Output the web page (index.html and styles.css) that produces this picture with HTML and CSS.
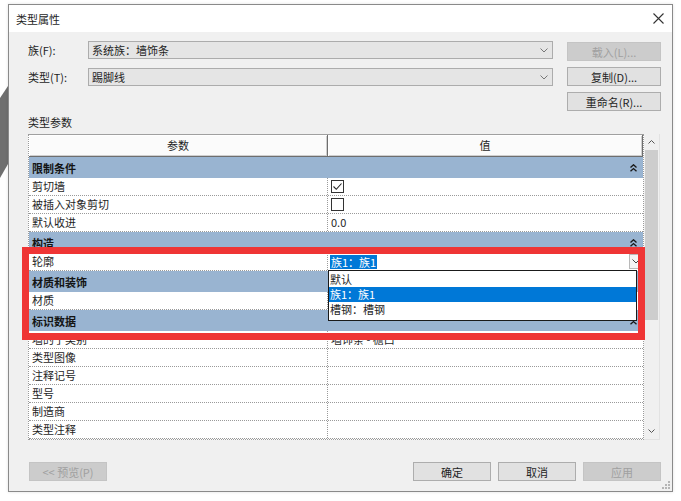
FILE: index.html
```html
<!DOCTYPE html>
<html lang="zh-CN">

<head>
    <meta charset="UTF-8">
    <title>类型属性</title>
    <link rel="stylesheet" href="styles.css">
</head>

<body>
    <div class="desk">
        <svg width="8" height="200" viewBox="0 0 8 200">
            <polygon points="8,86 8,164 0,178 0,98" fill="#6f6f6f" />
        </svg>
    </div>

    <div class="dialog">
        <div class="titlebar">
            <span>类型属性</span>
            <svg width="11" height="11" viewBox="0 0 11 11">
                <path d="M0.5 0.5 L10.5 10.5 M10.5 0.5 L0.5 10.5" stroke="#333" stroke-width="1.1" />
            </svg>
        </div>

        <div class="content">
            <div class="top">
                <div class="fields">
                    <div class="field">
                        <label>族(F):</label>
                        <div class="combo">
                            <span>系统族：墙饰条</span>
                            <svg width="8" height="5" viewBox="0 0 8 5"><polyline points="0.5,0.5 4,4 7.5,0.5" fill="none" stroke="#777" /></svg>
                        </div>
                    </div>
                    <div class="field">
                        <label>类型(T):</label>
                        <div class="combo">
                            <span>踢脚线</span>
                            <svg width="8" height="5" viewBox="0 0 8 5"><polyline points="0.5,0.5 4,4 7.5,0.5" fill="none" stroke="#777" /></svg>
                        </div>
                    </div>
                </div>
                <div class="side-buttons">
                    <button class="btn" disabled>载入(L)...</button>
                    <button class="btn">复制(D)...</button>
                    <button class="btn">重命名(R)...</button>
                </div>
            </div>

            <div class="section-label">类型参数</div>

            <div class="sheet-wrap">
                <div class="sheet">
                    <div class="head">
                        <div class="hcell">参数</div>
                        <div class="hcell">值</div>
                    </div>

                    <div class="group">限制条件<svg class="fold" width="7" height="8" viewBox="0 0 7 8"><polyline points="0.5,3.5 3.5,0.8 6.5,3.5" /><polyline points="0.5,7.3 3.5,4.6 6.5,7.3" /></svg></div>
                    <div class="row">
                        <div class="name">剪切墙</div>
                        <div class="value">
                            <svg width="13" height="13" viewBox="0 0 13 13"><rect x="0.5" y="0.5" width="12" height="12" fill="#fff" stroke="#333" /><polyline points="2.5,6.5 5.3,9.3 10.5,3.5" fill="none" stroke="#222" stroke-width="1.1" /></svg>
                        </div>
                    </div>
                    <div class="row">
                        <div class="name">被插入对象剪切</div>
                        <div class="value">
                            <svg width="13" height="13" viewBox="0 0 13 13"><rect x="0.5" y="0.5" width="12" height="12" fill="#fff" stroke="#333" /></svg>
                        </div>
                    </div>
                    <div class="row">
                        <div class="name">默认收进</div>
                        <div class="value">0.0</div>
                    </div>

                    <div class="group">构造<svg class="fold" width="7" height="8" viewBox="0 0 7 8"><polyline points="0.5,3.5 3.5,0.8 6.5,3.5" /><polyline points="0.5,7.3 3.5,4.6 6.5,7.3" /></svg></div>
                    <div class="row">
                        <div class="name">轮廓</div>
                        <div class="value editing">
                            <span class="selected">族1<span class="colon">：</span>族1</span>
                            <span class="drop-btn"><svg width="8" height="5" viewBox="0 0 8 5"><polyline points="0.5,0.5 4,4 7.5,0.5" fill="none" stroke="#444" /></svg></span>
                        </div>
                    </div>

                    <div class="group">材质和装饰<svg class="fold" width="7" height="8" viewBox="0 0 7 8"><polyline points="0.5,3.5 3.5,0.8 6.5,3.5" /><polyline points="0.5,7.3 3.5,4.6 6.5,7.3" /></svg></div>
                    <div class="row">
                        <div class="name">材质</div>
                        <div class="value"></div>
                    </div>

                    <div class="group">标识数据<svg class="fold" width="7" height="8" viewBox="0 0 7 8"><polyline points="0.5,3.5 3.5,0.8 6.5,3.5" /><polyline points="0.5,7.3 3.5,4.6 6.5,7.3" /></svg></div>
                    <div class="row">
                        <div class="name">墙的子类别</div>
                        <div class="value">墙饰条 - 檐口</div>
                    </div>
                    <div class="row">
                        <div class="name">类型图像</div>
                        <div class="value"></div>
                    </div>
                    <div class="row">
                        <div class="name">注释记号</div>
                        <div class="value"></div>
                    </div>
                    <div class="row">
                        <div class="name">型号</div>
                        <div class="value"></div>
                    </div>
                    <div class="row">
                        <div class="name">制造商</div>
                        <div class="value"></div>
                    </div>
                    <div class="row">
                        <div class="name">类型注释</div>
                        <div class="value"></div>
                    </div>
                </div>

                <div class="scrollbar">
                    <div class="sb-btn"><svg width="7" height="4" viewBox="0 0 7 4"><polyline points="0.5,3.5 3.5,0.5 6.5,3.5" fill="none" stroke="#555" /></svg></div>
                    <div class="sb-thumb"></div>
                    <div class="sb-track"></div>
                    <div class="sb-btn"><svg width="7" height="4" viewBox="0 0 7 4"><polyline points="0.5,0.5 3.5,3.5 6.5,0.5" fill="none" stroke="#555" /></svg></div>
                </div>

                <!-- open list of the 轮廓 combo -->
                <div class="dropdown">
                    <div class="item">默认</div>
                    <div class="item active">族1<span class="colon">：</span>族1</div>
                    <div class="item">槽钢<span class="colon">：</span>槽钢</div>
                </div>

                <div class="mark"></div>
            </div>

            <div class="footer">
                <button class="btn small" disabled>&lt;&lt; 预览(P)</button>
                <div class="actions">
                    <button class="btn small">确定</button>
                    <button class="btn small">取消</button>
                    <button class="btn small" disabled>应用</button>
                </div>
            </div>
        </div>

        <svg class="grip" width="8" height="8" viewBox="0 0 8 8" fill="#b5b5b5">
            <rect x="6" y="0" width="2" height="2" />
            <rect x="3" y="3" width="2" height="2" />
            <rect x="6" y="3" width="2" height="2" />
            <rect x="0" y="6" width="2" height="2" />
            <rect x="3" y="6" width="2" height="2" />
            <rect x="6" y="6" width="2" height="2" />
        </svg>
    </div>
</body>

</html>
```

FILE: styles.css
```css
body {
    margin: 0;
    width: 681px;
    height: 501px;
    display: flex;
    align-items: flex-start;
    background-color: #fff;
    font-family: "Noto Sans CJK SC", "Liberation Sans", sans-serif;
    font-size: 11px;
    color: #1e1e1e;
    overflow: hidden;
}

.desk {
    width: 8px;
    flex: none;
}

.desk svg {
    display: block;
}

.dialog {
    position: relative;
    width: 665px;
    height: 488px;
    margin-top: 4px;
    box-sizing: border-box;
    border: 1px solid #8a8a8a;
    background-color: #f0f0f0;
    display: flex;
    flex-direction: column;
    box-shadow: 0 0 3px rgba(0, 0, 0, 0.12);
}

.titlebar {
    height: 27px;
    flex: none;
    background-color: #fff;
    display: flex;
    align-items: center;
    justify-content: space-between;
    padding: 0 8px 0 7px;
    line-height: 14px;
}

.titlebar svg {
    display: block;
}

.content {
    padding: 9px 11px 0 19px;
}

.top {
    display: flex;
    gap: 14px;
}

.fields {
    width: 525px;
    display: flex;
    flex-direction: column;
    gap: 9px;
}

.field {
    display: flex;
    align-items: center;
    height: 18px;
}

.field label {
    width: 60px;
    line-height: 14px;
}

.combo {
    width: 465px;
    height: 18px;
    box-sizing: border-box;
    border: 1px solid #acacac;
    background-color: #e5e5e5;
    display: flex;
    align-items: center;
    justify-content: space-between;
    padding: 0 4px 0 3px;
    line-height: 14px;
}

.combo svg {
    display: block;
}

.side-buttons {
    display: flex;
    flex-direction: column;
    gap: 6px;
    padding-top: 1px;
}

.btn {
    width: 94px;
    height: 19px;
    padding: 0;
    margin: 0;
    box-sizing: border-box;
    border: 1px solid #adadad;
    background-color: #e1e1e1;
    color: #1e1e1e;
    font-family: inherit;
    font-size: 11px;
    line-height: 14px;
}

.btn:disabled {
    background-color: #cccccc;
    border-color: #c4c4c4;
    color: #a0a0a0;
}

.btn.small {
    width: 78px;
}

.section-label {
    margin-top: 4px;
    height: 14px;
    line-height: 14px;
}

.sheet-wrap {
    position: relative;
    display: flex;
    margin-top: 5px;
    height: 306px;
}

.sheet {
    width: 616px;
    height: 306px;
    box-sizing: border-box;
    border: 1px dotted #9a9a9a;
    border-top: 1px solid #a0a0a0;
    background-color: #fff;
}

.head,
.row {
    display: grid;
    grid-template-columns: 299px 1fr;
}

.head {
    height: 22px;
}

.hcell {
    background-color: #fbfbfb;
    border-right: 1px solid #6e6e6e;
    border-bottom: 1px solid #6e6e6e;
    box-shadow: inset 1px 1px #fff, inset -1px -1px #cfcfcf;
    text-align: center;
    line-height: 21px;
}

.group {
    height: 21px;
    background-color: #99b4d1;
    font-weight: bold;
    display: flex;
    align-items: center;
    justify-content: space-between;
    padding: 0 6px 0 3px;
    line-height: 14px;
    color: #141414;
}

.fold {
    display: block;
    fill: none;
    stroke: #1a1a1a;
    stroke-width: 1.4;
}

.row {
    height: 18px;
    box-sizing: border-box;
    border-bottom: 1px dotted #9a9a9a;
}

.name {
    border-right: 1px dotted #9a9a9a;
    padding-left: 3px;
    line-height: 17px;
}

.value {
    padding-left: 3px;
    line-height: 17px;
    display: flex;
    align-items: center;
}

.value svg {
    display: block;
}

.value.editing {
    padding-left: 2px;
    padding-right: 1px;
    justify-content: space-between;
}

.selected {
    background-color: #0078d7;
    color: #fff;
    line-height: 14px;
    padding: 0 1px;
}

.colon {
    font-family: "Noto Sans CJK TC", "Noto Sans CJK SC", sans-serif;
}

.drop-btn {
    width: 13px;
    height: 15px;
    box-sizing: border-box;
    border: 1px solid #b9b9b9;
    background-color: #f4f4f4;
    display: flex;
    align-items: center;
    justify-content: center;
}

.scrollbar {
    width: 16px;
    height: 306px;
    display: flex;
    flex-direction: column;
    background-color: #f0f0f0;
    border-right: 1px solid #e2e2e2;
    border-bottom: 1px solid #e2e2e2;
    box-sizing: border-box;
}

.sb-btn {
    height: 16px;
    display: flex;
    align-items: center;
    justify-content: center;
}

.sb-btn svg {
    display: block;
}

.sb-thumb {
    height: 170px;
    margin: 0 1px;
    background-color: #cdcdcd;
}

.sb-track {
    flex: 1;
}

.dropdown {
    position: absolute;
    left: 300px;
    top: 136px;
    width: 309px;
    height: 51px;
    box-sizing: border-box;
    border: 1px solid #1a1a1a;
    background-color: #fff;
    padding-top: 1px;
}

.item {
    height: 15px;
    line-height: 15px;
    padding-left: 1px;
}

.item.active {
    background-color: #0078d7;
    color: #fff;
}

.mark {
    position: absolute;
    left: -6px;
    top: 113px;
    width: 623px;
    height: 93px;
    box-sizing: border-box;
    border: 7px solid #ef3535;
    pointer-events: none;
}

.footer {
    margin-top: 22px;
    display: flex;
    justify-content: space-between;
    padding-left: 1px;
}

.actions {
    display: flex;
    gap: 7px;
}

.grip {
    position: absolute;
    right: 2px;
    bottom: 2px;
}
```
